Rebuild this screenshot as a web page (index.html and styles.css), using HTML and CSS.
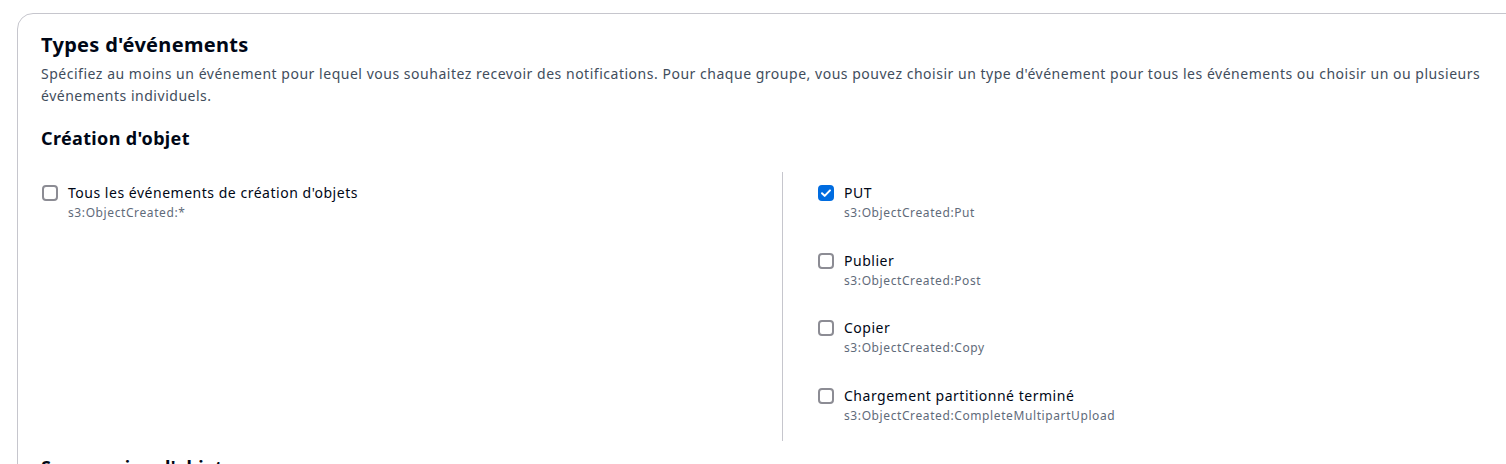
FILE: index.html
```html
<!DOCTYPE html>
<html lang="fr">
<head>
<meta charset="utf-8">
<title>Types d'événements</title>
<link rel="stylesheet" href="styles.css">
</head>
<body>
<div class="card">
  <h2 class="title">Types d'événements</h2>
  <p class="desc">Spécifiez au moins un événement pour lequel vous souhaitez recevoir des notifications. Pour chaque groupe, vous pouvez choisir un type d'événement pour tous les événements ou choisir un ou plusieurs événements individuels.</p>
  <h3 class="group">Création d'objet</h3>
  <div class="cols">
    <div class="col col-left">
      <label class="opt">
        <span class="box"></span>
        <span class="txt"><span class="lbl">Tous les événements de création d'objets</span><span class="sub">s3:ObjectCreated:*</span></span>
      </label>
    </div>
    <div class="col col-right">
      <label class="opt">
        <span class="box checked"><svg viewBox="0 0 16 16" width="16" height="16"><path d="M4 8.2l2.7 2.7L12 5.4" fill="none" stroke="#fff" stroke-width="2" stroke-linecap="round" stroke-linejoin="round"/></svg></span>
        <span class="txt"><span class="lbl">PUT</span><span class="sub">s3:ObjectCreated:Put</span></span>
      </label>
      <label class="opt">
        <span class="box"></span>
        <span class="txt"><span class="lbl">Publier</span><span class="sub">s3:ObjectCreated:Post</span></span>
      </label>
      <label class="opt">
        <span class="box"></span>
        <span class="txt"><span class="lbl">Copier</span><span class="sub">s3:ObjectCreated:Copy</span></span>
      </label>
      <label class="opt">
        <span class="box"></span>
        <span class="txt"><span class="lbl">Chargement partitionné terminé</span><span class="sub">s3:ObjectCreated:CompleteMultipartUpload</span></span>
      </label>
    </div>
  </div>
  <h3 class="group group-next">Suppression d'objet</h3>
</div>
</body>
</html>
```
FILE: styles.css
```css
html, body {
  margin: 0;
  padding: 0;
  background: #ffffff;
  overflow: hidden;
}
body {
  padding: 13px 0 0 17px;
  font-family: "Noto Sans", "Open Sans", Arial, sans-serif;
  color: #000716;
  width: 1600px;
}
.card {
  width: 1472px;
  border: 1px solid #c6c6cd;
  border-radius: 16px;
  padding: 19px 23px 40px 23px;
  box-sizing: content-box;
}
.title {
  margin: 0;
  font-size: 20px;
  line-height: 24px;
  font-weight: 700;
  letter-spacing: 0.3px;
  color: #000716;
}
.desc {
  margin: 6px 0 0 0;
  font-size: 14px;
  line-height: 22px;
  letter-spacing: 0.52px;
  color: #414d5c;
}
.group {
  margin: 20px 0 0 0;
  font-size: 18px;
  line-height: 22px;
  font-weight: 700;
  letter-spacing: 0.35px;
  color: #000716;
}
.group-next {
  margin-top: 15px;
}
.cols {
  display: grid;
  grid-template-columns: 741px 1fr;
  margin-top: 23px;
}
.col {
  display: flex;
  flex-direction: column;
  gap: 27.5px;
  padding: 10px 0 16px 0;
}
.col-right {
  border-left: 1px solid #c6c6cd;
  padding-left: 34px;
}
.opt {
  display: flex;
  align-items: flex-start;
  gap: 10px;
}
.box {
  flex: none;
  width: 12px;
  height: 12px;
  margin-top: 3px;
  border: 2px solid #8c8c94;
  border-radius: 4px;
  margin-left: 1px;
  position: relative;
}
.box.checked {
  background: #006ce0;
  border-color: #006ce0;
}
.box svg {
  position: absolute;
  left: -2px;
  top: -2px;
}
.txt {
  display: flex;
  flex-direction: column;
}
.lbl {
  font-size: 14px;
  line-height: 22px;
  letter-spacing: 0.52px;
  color: #000716;
}
.sub {
  font-size: 12px;
  line-height: 18px;
  letter-spacing: 0.6px;
  color: #5f6b7a;
}
```
